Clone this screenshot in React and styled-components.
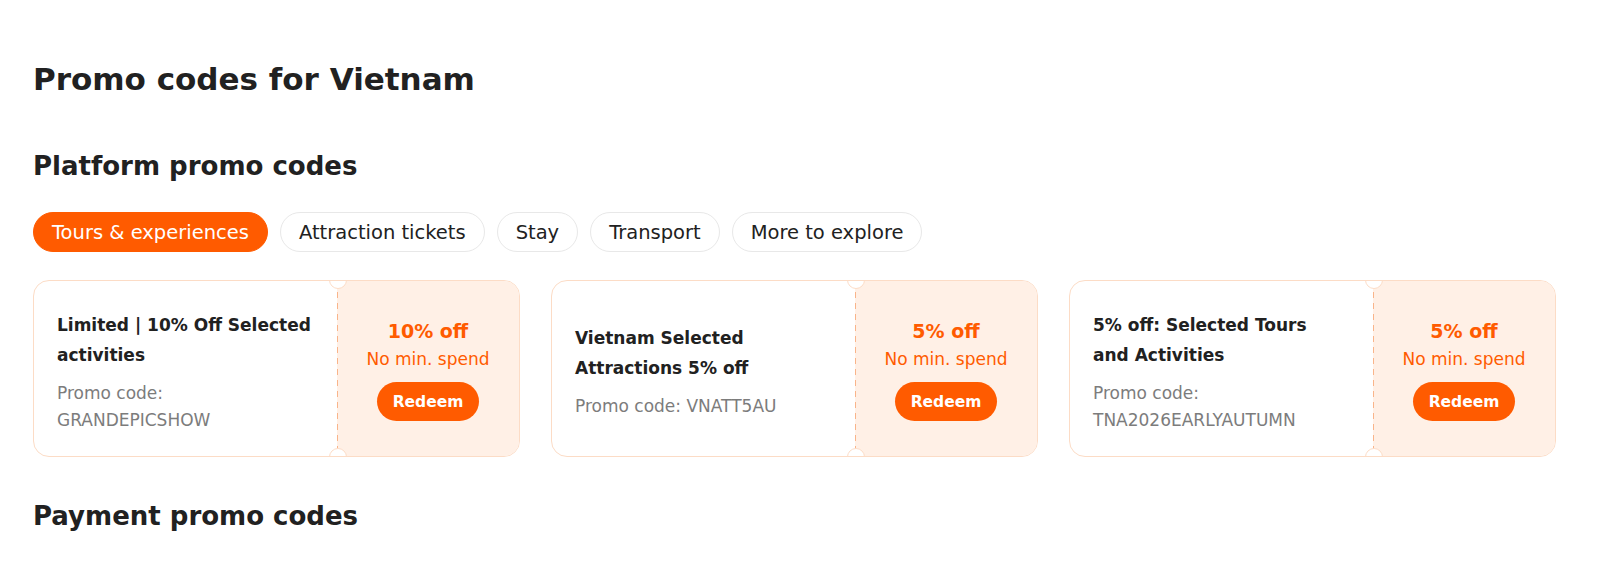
import React, { useState } from "react";
import styled, { createGlobalStyle } from "styled-components";

const GlobalStyle = createGlobalStyle`
  html, body {
    margin: 0;
    padding: 0;
    background: #ffffff;
  }
  body {
    font-family: "DejaVu Sans", "Liberation Sans", sans-serif;
    color: #212121;
  }
`;

const Page = styled.div`
  width: 1523px;
  padding: 59px 0 0 33px;
`;

const Title = styled.h1`
  margin: 0;
  font-size: 31px;
  line-height: 40px;
  font-weight: 700;
`;

const SectionTitle = styled.h2`
  margin: ${({ top }) => top || 0}px 0 0;
  font-size: 26px;
  line-height: 34px;
  font-weight: 700;
`;

const Tabs = styled.div`
  display: flex;
  gap: 12px;
  margin-top: 29px;
`;

const Tab = styled.button`
  height: 40px;
  padding: 0 18px;
  border-radius: 20px;
  border: 1px solid ${({ active }) => (active ? "#ff5b00" : "#e8e8e8")};
  background: ${({ active }) => (active ? "#ff5b00" : "#ffffff")};
  color: ${({ active }) => (active ? "#ffffff" : "#212121")};
  font-family: inherit;
  font-size: 19.5px;
  font-weight: 400;
  cursor: pointer;
`;

const Cards = styled.div`
  display: grid;
  grid-template-columns: repeat(3, 487px);
  gap: 31px;
  margin-top: 28px;
`;

const Card = styled.div`
  display: flex;
  height: 177px;
  border: 1px solid #fcdcc6;
  border-radius: 16px;
  overflow: hidden;
  box-sizing: border-box;
`;

const Info = styled.div`
  flex: 1;
  display: flex;
  flex-direction: column;
  justify-content: center;
  padding: 7px 20px 0 23px;
`;

const CardTitle = styled.div`
  font-size: 17px;
  line-height: 29.5px;
  font-weight: 700;
  color: #212121;
`;

const Code = styled.div`
  margin-top: 10px;
  font-size: 17px;
  line-height: 26.5px;
  color: #7c7c7c;
`;

const Offer = styled.div`
  position: relative;
  width: 182px;
  background:
    repeating-linear-gradient(to bottom, #f9b48a 0 6px, transparent 6px 11px)
      left top / 1px 100% no-repeat,
    #fff0e6;
  display: flex;
  flex-direction: column;
  align-items: center;
  justify-content: center;

  &::before,
  &::after {
    content: "";
    position: absolute;
    left: -8px;
    width: 16px;
    height: 16px;
    border-radius: 50%;
    background: #ffffff;
    border: 1px solid #fcdcc6;
  }
  &::before {
    top: -10px;
  }
  &::after {
    bottom: -10px;
  }
`;

const Discount = styled.div`
  font-size: 19px;
  line-height: 30px;
  font-weight: 700;
  color: #ff5b00;
`;

const MinSpend = styled.div`
  font-size: 17px;
  line-height: 26px;
  color: #ff5b00;
`;

const Redeem = styled.button`
  margin-top: 10px;
  width: 102px;
  height: 39px;
  border: none;
  border-radius: 20px;
  background: #ff5b00;
  color: #ffffff;
  font-family: inherit;
  font-size: 15.5px;
  font-weight: 700;
  cursor: pointer;
`;

const tabs = [
  "Tours & experiences",
  "Attraction tickets",
  "Stay",
  "Transport",
  "More to explore",
];

const promos = [
  {
    title: "Limited | 10% Off Selected activities",
    code: "GRANDEPICSHOW",
    discount: "10% off",
  },
  {
    title: "Vietnam Selected Attractions 5% off",
    code: "VNATT5AU",
    discount: "5% off",
  },
  {
    title: "5% off: Selected Tours and\u00a0Activities",
    code: "TNA2026EARLYAUTUMN",
    discount: "5% off",
  },
];

const App = () => {
  const [activeTab, setActiveTab] = useState(0);

  return (
    <Page>
      <GlobalStyle />
      <Title>Promo codes for Vietnam</Title>
      <SectionTitle top={50}>Platform promo codes</SectionTitle>
      <Tabs>
        {tabs.map((tab, index) => (
          <Tab
            key={tab}
            active={index === activeTab}
            onClick={() => setActiveTab(index)}
          >
            {tab}
          </Tab>
        ))}
      </Tabs>
      <Cards>
        {promos.map((promo) => (
          <Card key={promo.code}>
            <Info>
              <CardTitle>{promo.title}</CardTitle>
              <Code>Promo code: {promo.code}</Code>
            </Info>
            <Offer>
              <Discount>{promo.discount}</Discount>
              <MinSpend>No min. spend</MinSpend>
              <Redeem>Redeem</Redeem>
            </Offer>
          </Card>
        ))}
      </Cards>
      <SectionTitle top={42}>Payment promo codes</SectionTitle>
    </Page>
  );
};

export default App;
